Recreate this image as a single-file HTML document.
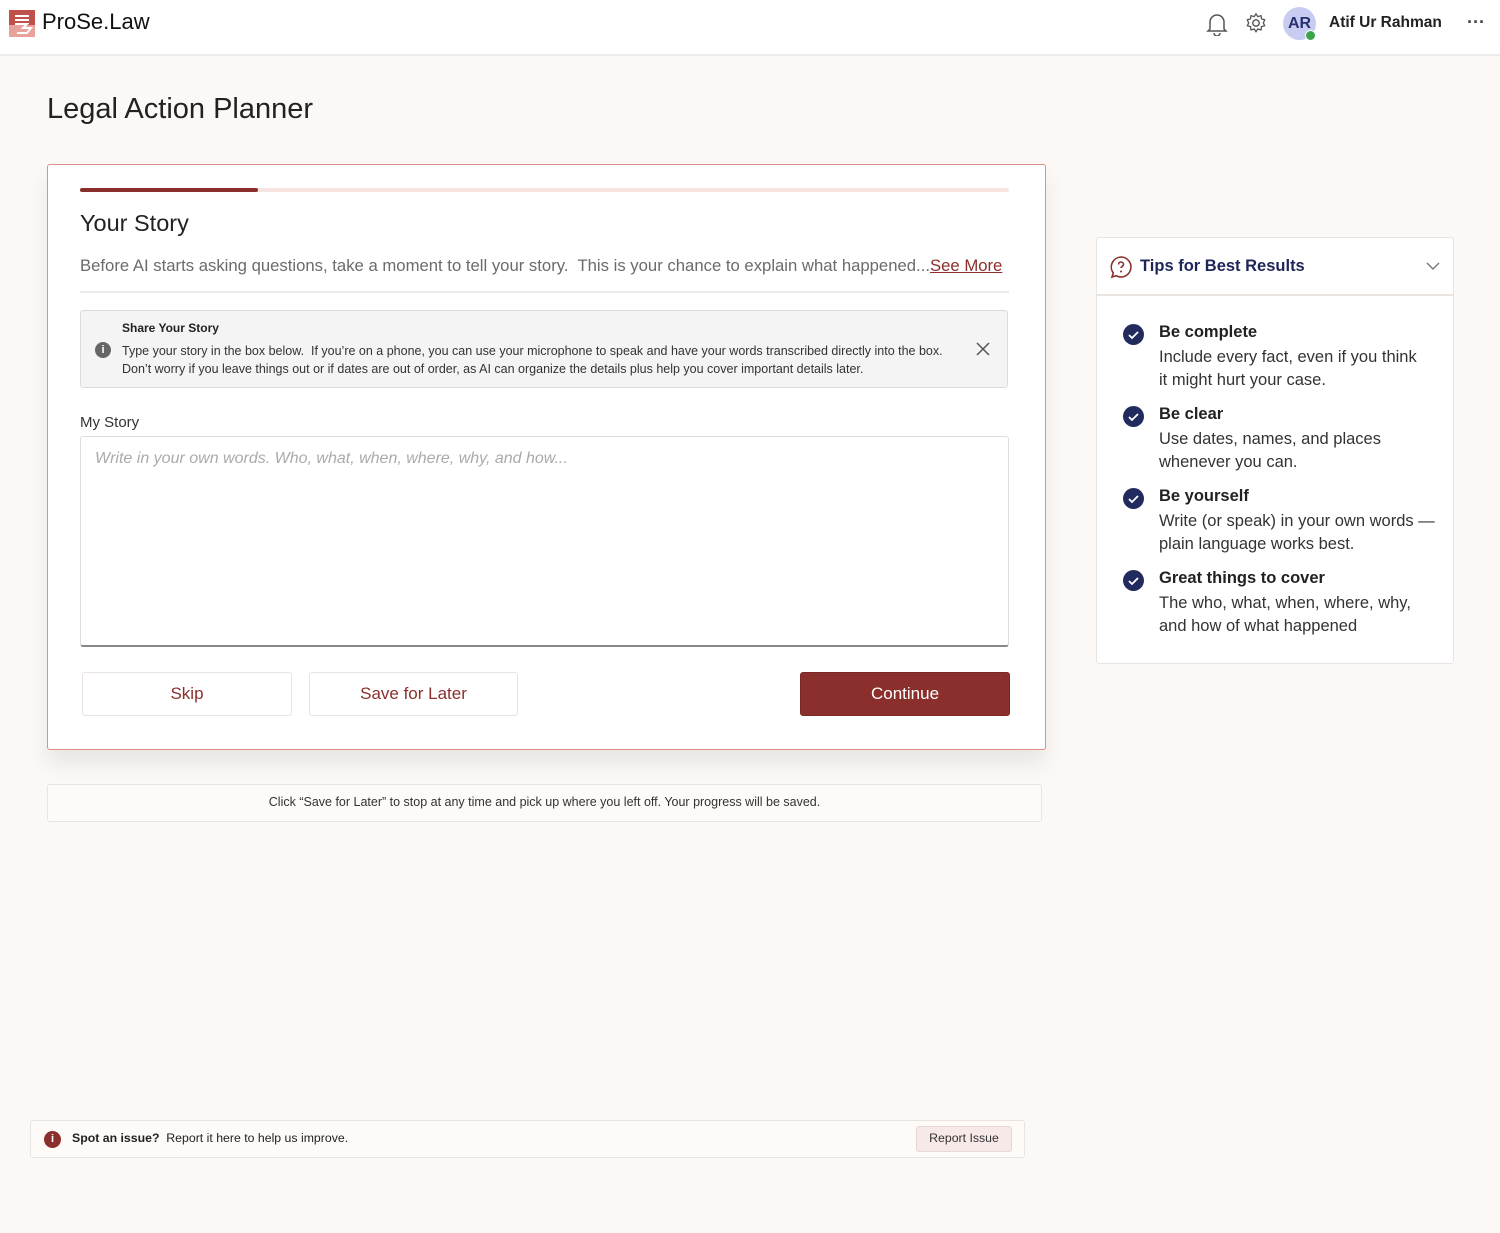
<!DOCTYPE html>
<html><head><meta charset="utf-8"><style>
*{box-sizing:border-box;margin:0;padding:0}
body{width:1500px;height:1233px;background:#fcf8f6;font-family:"Liberation Sans",sans-serif;color:#222;position:relative;overflow:hidden}
.abs{position:absolute}
.hdr{left:0;top:0;width:1500px;height:56px;background:#fff;border-bottom:2px solid #eeeae7}
.card{left:47px;top:164px;width:999px;height:586px;background:#fff;border:1.5px solid #de8f88;border-radius:3px;box-shadow:0 14px 22px rgba(0,0,0,0.08)}
.btn{position:absolute;top:672px;height:44px;border:1.5px solid #ebe3e0;border-radius:3px;background:#fff;color:#8b2f2c;font-size:17px;display:flex;align-items:center;justify-content:center}
.tip{position:absolute;left:1123px}
.tip .c{position:absolute;left:0;top:0;width:21px;height:21px;border-radius:50%;background:#222b5e}
.tip b{position:absolute;left:36px;top:-1px;font-size:16.5px;white-space:nowrap}
.tip p{position:absolute;left:36px;top:22px;font-size:16.5px;line-height:23px;color:#333;white-space:nowrap}
</style></head><body>
<div class="abs hdr"></div>
<svg class="abs" style="left:9px;top:10px" width="26" height="27" viewBox="0 0 26 27"><rect width="26" height="27" fill="#c0504a"/><rect y="15" width="26" height="12" fill="#e8a29c"/><path d="M6 6h14M6 10h14M6 14h12l-4 4h8l-4 5H8" stroke="#fff" stroke-width="2" fill="none"/></svg>
<div class="abs" style="left:42px;top:9px;font-size:22px;color:#111">ProSe.Law</div>
<svg class="abs" style="left:1206px;top:12px" width="22" height="24" viewBox="0 0 22 24"><path d="M4 17V10a7 7 0 0114 0v7l2 2H2z M8 21a3 3 0 006 0" fill="none" stroke="#555" stroke-width="1.5"/></svg>
<svg class="abs" style="left:1245px;top:12px" width="22" height="22" viewBox="0 0 24 24"><circle cx="12" cy="12" r="3.5" fill="none" stroke="#555" stroke-width="1.5"/><path d="M12 2l2 3 3.5-1 .5 3.5 3.5 1-1.5 3.5 1.5 3-3.5 1-.5 3.5-3.5-1-2 3-2-3-3.5 1-.5-3.5-3.5-1 1.5-3-1.5-3.5 3.5-1 .5-3.5 3.5 1z" fill="none" stroke="#555" stroke-width="1.4"/></svg>
<div class="abs" style="left:1283px;top:7px;width:33px;height:33px;border-radius:50%;background:#c8ccf0;color:#2a3170;font-weight:bold;font-size:16px;text-align:center;line-height:33px">AR</div>
<div class="abs" style="left:1305px;top:30px;width:11px;height:11px;border-radius:50%;background:#3aa44a;border:1.5px solid #fff"></div>
<div class="abs" style="left:1329px;top:14px;font-size:15.5px;font-weight:bold;color:#222">Atif Ur Rahman</div>
<div class="abs" style="left:1467px;top:12px;font-size:18px;color:#444;font-weight:bold">···</div>

<div class="abs" style="left:47px;top:93px;font-size:29px;color:#222">Legal Action Planner</div>

<div class="abs card"></div>
<div class="abs" style="left:80px;top:188px;width:929px;height:4px;background:#f8e4e1;border-radius:2px"></div>
<div class="abs" style="left:80px;top:188px;width:178px;height:4px;background:#8b2f2c;border-radius:2px"></div>
<div class="abs" style="left:80px;top:210px;font-size:23.5px;color:#222">Your Story</div>
<div class="abs" style="left:80px;top:256px;font-size:16.7px;color:#6b6b6b;white-space:nowrap">Before AI starts asking questions, take a moment to tell your story.&nbsp; This is your chance to explain what happened...<span style="color:#8b2f2c;text-decoration:underline">See More</span></div>
<div class="abs" style="left:80px;top:291px;width:929px;height:2px;background:#eeeae7"></div>
<div class="abs" style="left:80px;top:310px;width:928px;height:78px;background:#f4f4f4;border:1.5px solid #dcdcdc;border-radius:3px"></div>
<div class="abs" style="left:95px;top:342px;width:16px;height:16px;border-radius:50%;background:#666;color:#fff;font-size:11px;font-weight:bold;text-align:center;line-height:16px">i</div>
<div class="abs" style="left:122px;top:321px;font-size:12px;font-weight:bold;color:#222">Share Your Story</div>
<div class="abs" style="left:122px;top:342px;font-size:12.5px;line-height:18px;color:#333;white-space:nowrap">Type your story in the box below.&nbsp; If you’re on a phone, you can use your microphone to speak and have your words transcribed directly into the box.<br>Don’t worry if you leave things out or if dates are out of order, as AI can organize the details plus help you cover important details later.</div>
<svg class="abs" style="left:976px;top:342px" width="14" height="14"><path d="M1 1L13 13M13 1L1 13" stroke="#555" stroke-width="1.5"/></svg>
<div class="abs" style="left:80px;top:414px;font-size:15px;color:#333">My Story</div>
<div class="abs" style="left:80px;top:436px;width:929px;height:211px;background:#fff;border:1.5px solid #e0dcda;border-bottom:2px solid #888;border-radius:3px"></div>
<div class="abs" style="left:95px;top:450px;font-size:16px;color:#aaa;font-style:italic">Write in your own words. Who, what, when, where, why, and how...</div>
<div class="btn" style="left:82px;width:210px">Skip</div>
<div class="btn" style="left:309px;width:209px">Save for Later</div>
<div class="btn" style="left:800px;width:210px;background:#8b2f2c;color:#fff;border-color:#7a2826">Continue</div>

<div class="abs" style="left:47px;top:784px;width:995px;height:38px;background:#fdfaf8;border:1.5px solid #e8e4e2;border-radius:3px;font-size:12.5px;color:#333;text-align:center;line-height:35px">Click “Save for Later” to stop at any time and pick up where you left off. Your progress will be saved.</div>

<div class="abs" style="left:1096px;top:237px;width:358px;height:427px;background:#fff;border:1.5px solid #ebe3e0;border-radius:3px"></div>
<div class="abs" style="left:1096px;top:294px;width:358px;height:1.5px;background:#ebe3e0"></div>
<svg class="abs" style="left:1109px;top:255px" width="24" height="24" viewBox="0 0 24 24"><path d="M12 2a10 10 0 11-5 18.7L3 22l1.3-4A10 10 0 0112 2z" fill="none" stroke="#8b2f2c" stroke-width="1.6"/><path d="M9.5 9.5a2.5 2.5 0 115 0c0 1.8-2.5 2-2.5 3.5" fill="none" stroke="#8b2f2c" stroke-width="1.6"/><circle cx="12" cy="16.5" r="1" fill="#8b2f2c"/></svg>
<div class="abs" style="left:1140px;top:257px;font-size:16.5px;font-weight:bold;color:#1e2558">Tips for Best Results</div>
<svg class="abs" style="left:1426px;top:262px" width="14" height="9"><path d="M1 1l6 6 6-6" fill="none" stroke="#777" stroke-width="1.4"/></svg>
<div class="tip" style="top:324px"><div class="c"></div><b>Be complete</b><p>Include every fact, even if you think<br>it might hurt your case.</p></div>
<div class="tip" style="top:406px"><div class="c"></div><b>Be clear</b><p>Use dates, names, and places<br>whenever you can.</p></div>
<div class="tip" style="top:488px"><div class="c"></div><b>Be yourself</b><p>Write (or speak) in your own words —<br>plain language works best.</p></div>
<div class="tip" style="top:570px"><div class="c"></div><b>Great things to cover</b><p>The who, what, when, where, why,<br>and how of what happened</p></div>
<svg class="abs" style="left:1127px;top:329px" width="14" height="400"><g fill="none" stroke="#fff" stroke-width="1.8"><path d="M2 6l3 3 6-6"/><path transform="translate(0,82)" d="M2 6l3 3 6-6"/><path transform="translate(0,164)" d="M2 6l3 3 6-6"/><path transform="translate(0,246)" d="M2 6l3 3 6-6"/></g></svg>

<div class="abs" style="left:30px;top:1120px;width:995px;height:38px;background:#fdfaf8;border:1.5px solid #e8e4e2;border-radius:3px"></div>
<div class="abs" style="left:44px;top:1131px;width:17px;height:17px;border-radius:50%;background:#8b2f2c;color:#fff;font-size:11px;font-weight:bold;text-align:center;line-height:17px">i</div>
<div class="abs" style="left:72px;top:1131px;font-size:12.3px;color:#222"><b>Spot an issue?</b>&nbsp; Report it here to help us improve.</div>
<div class="abs" style="left:916px;top:1126px;width:96px;height:26px;background:#f7e9e7;border:1.5px solid #ead7d4;border-radius:3px;font-size:12.3px;color:#333;text-align:center;line-height:23px">Report Issue</div>
</body></html>
